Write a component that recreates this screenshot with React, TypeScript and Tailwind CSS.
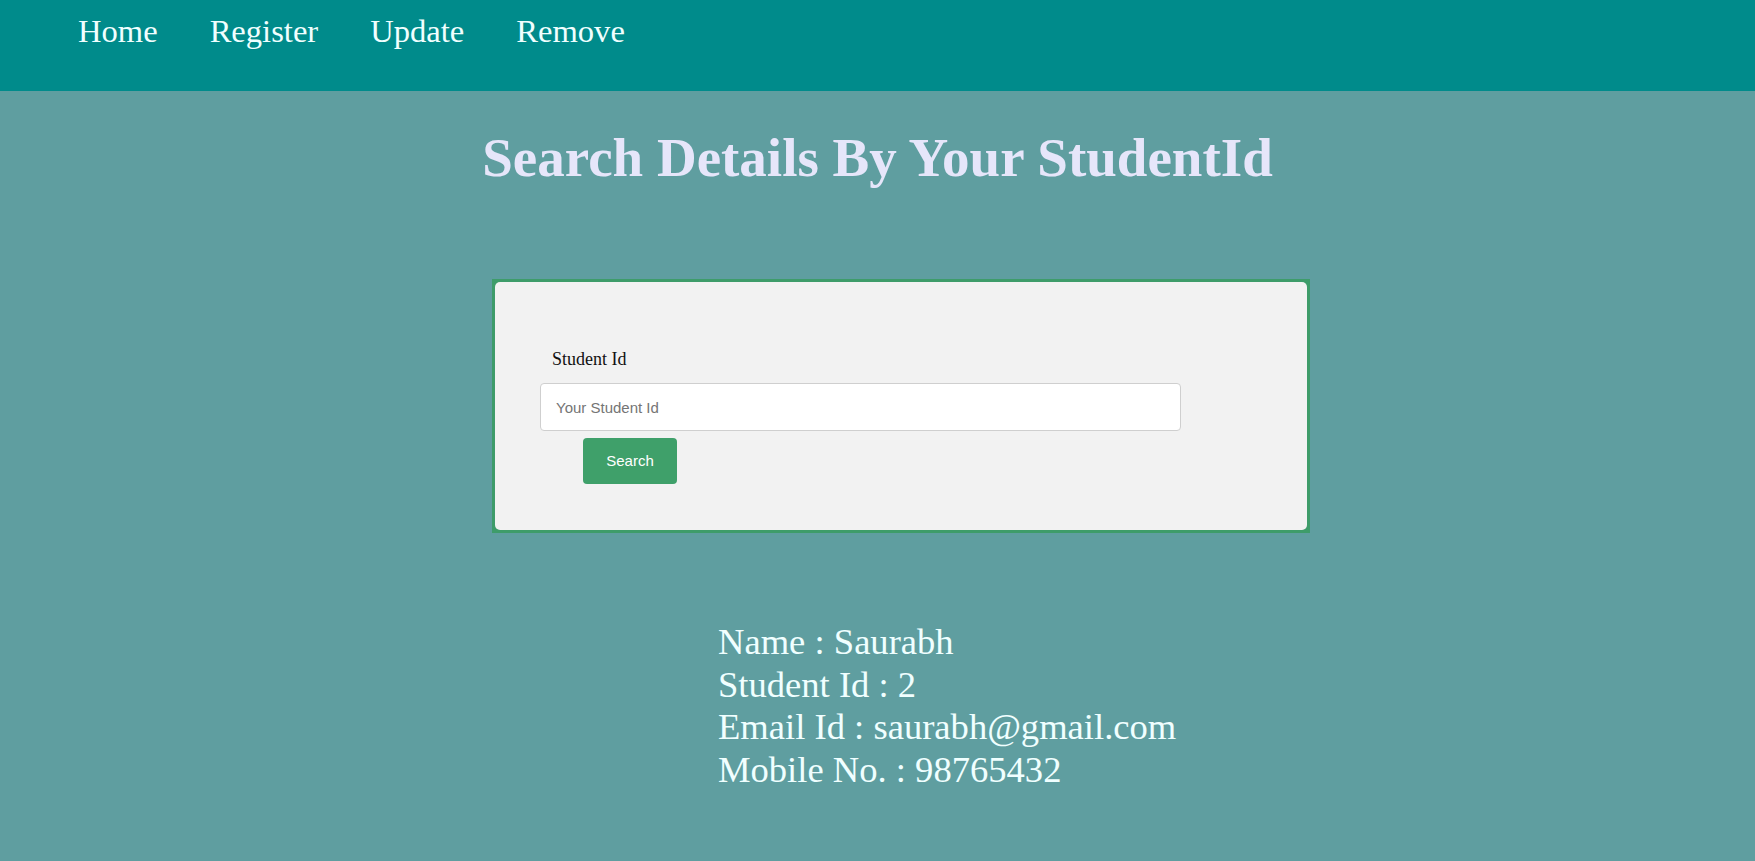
import React from "react";

export default function App() {
  const serif = { fontFamily: '"Liberation Serif", "Times New Roman", serif' };
  const sans = { fontFamily: '"Liberation Sans", Arial, sans-serif' };
  return (
    <div className="min-h-screen bg-[#5f9ea0] pb-[40px]" style={serif}>
      <nav className="h-[91px] bg-[#008b8b] flex items-start gap-[52px] pl-[78px] pt-[13px]">
        {["Home", "Register", "Update", "Remove"].map((t) => (
          <a key={t} href="#" className="text-[32.6px] leading-[36px] text-[#f0ffff] no-underline">
            {t}
          </a>
        ))}
      </nav>

      <h1 className="mt-[37px] text-center text-[55px] leading-[60px] font-bold text-[#e6e6fa]">
        Search Details By Your StudentId
      </h1>

      <div className="mt-[91px] ml-[492px] w-[818px] bg-[#3e9c6a] p-[3px]">
        <div className="bg-[#f2f2f2] rounded-[5px] pt-[67px] pb-[46px] pl-[45px]">
          <label className="block ml-[12px] text-[18px] leading-[20px] text-[#111]">Student Id</label>
          <input
            type="text"
            placeholder="Your Student Id"
            className="mt-[14px] block w-[641px] h-[48px] bg-white border border-[#cfcfcf] rounded-[4px] px-[15px] text-[15px] text-[#333] placeholder:text-[#757575] outline-none"
            style={sans}
          />
          <button
            className="mt-[7px] ml-[43px] block w-[94px] h-[46px] bg-[#3fa06a] text-white text-[15px] rounded-[4px]"
            style={sans}
          >
            Search
          </button>
        </div>
      </div>

      <div className="mt-[88px] ml-[718px] text-[36.6px] leading-[42.5px] text-[#f0ffff]">
        <div>Name : Saurabh</div>
        <div>Student Id : 2</div>
        <div>Email Id : saurabh@gmail.com</div>
        <div>Mobile No. : 98765432</div>
      </div>
    </div>
  );
}
